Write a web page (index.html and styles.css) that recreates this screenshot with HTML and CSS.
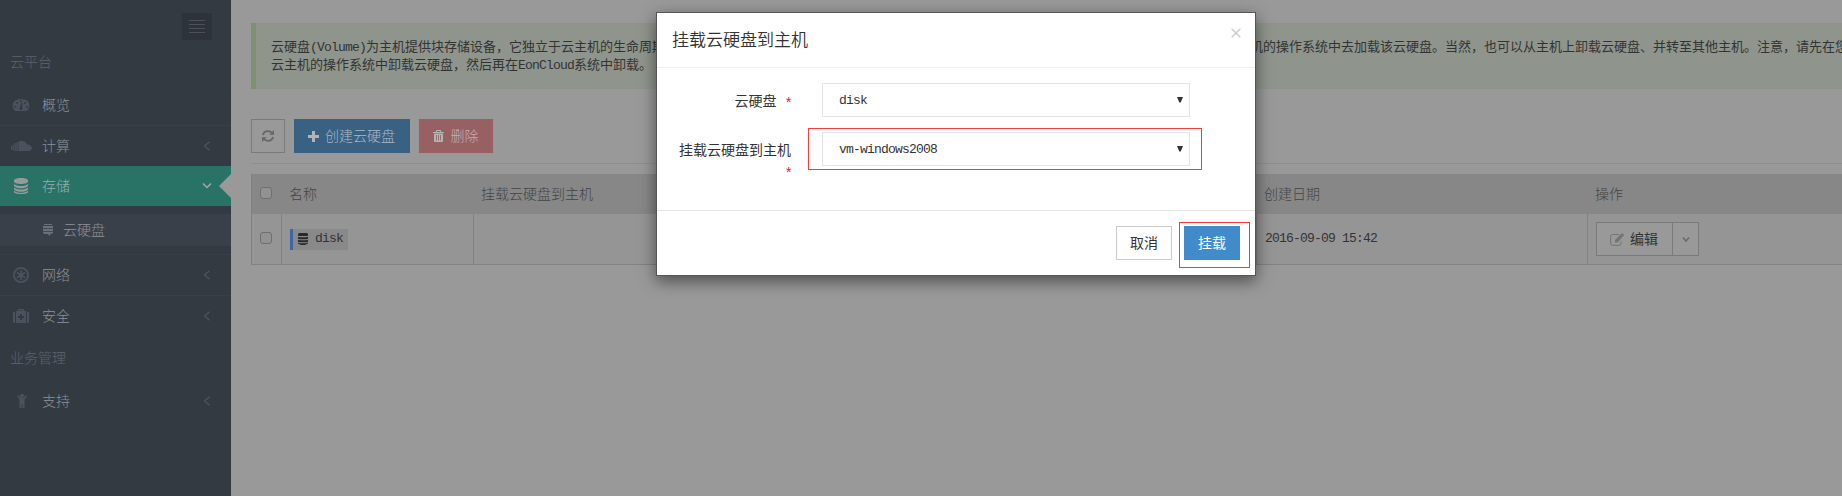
FILE: index.html
```html
<!DOCTYPE html>
<html lang="zh-CN">
<head>
<meta charset="utf-8">
<title>EonCloud</title>
<link rel="stylesheet" href="styles.css">
</head>
<body>
<div class="app">
  <nav class="sidebar">
    <div class="toggle-row"><div class="toggle"><i></i><i></i><i></i><i></i></div></div>
    <div class="nav-heading">云平台</div>
    <a class="nav-item">
      <svg class="nav-icon" viewBox="0 0 22 18"><path fill-rule="evenodd" d="M5 15C2 12 2 7 4.500 5Q7 3 11 3T17.500 5C20 7 20 12 17 15ZM10 4.500v1.700h1.700v-1.700ZM6.200 6v1.700h1.700V6ZM14.200 6v1.700h1.700V6ZM4.500 10v1.700h1.700v-1.700ZM16 10v1.700h1.700v-1.700ZM11.500 7L10 11Q8.500 13.500 11 14Q13.500 13.500 12 11L12.500 7Z"/></svg>
      <span>概览</span>
    </a>
    <a class="nav-item ruled">
      <svg class="nav-icon" viewBox="0 0 22 18"><path d="M1 9h1v4H1zM2.600 7.500h1.200v6H2.600zM4.400 6h1.400v8H4.400zM6.400 5.500l1.400-.5v9H6.400zM8.400 14V5Q11 3 14 4.500Q16.500 5 17 7.500Q21.500 7.500 22 11Q21.500 14 18.500 14Z"/></svg>
      <span>计算</span>
      <svg class="chev" viewBox="0 0 8 10"><path d="M6.500 .8L1.500 5l5 4.200"/></svg>
    </a>
    <a class="nav-item active">
      <svg class="nav-icon" viewBox="0 0 22 18"><path d="M6 1.500h2V1h6v.5h2l2 1.500v2l-2 1.500h-2l-1 .5H9L8 6.500H6L4 5V3zM4 7l2 1.200 3 .8h4l3-.8L18 7v2l-2 1.500-3 .7H9l-3-.7L4 9zM4 10.500l2 1.200 3 .8h4l3-.8 2-1.200v2L16 14l-3 .7H9L6 14l-2-1.500zM4 13.800L6 15l3 .8h4l3-.8 2-1.200V15.500L16 16.500l-2 .5H8l-2-.5-2-1z"/></svg>
      <span>存储</span>
      <svg class="chev down" viewBox="0 0 10 8"><path d="M1 1.500l4 4 4-4"/></svg>
      <b class="notch"></b>
    </a>
    <div class="submenu">
      <a class="sub-item">
        <svg class="sub-icon" viewBox="0 0 10 12"><path d="M1 0h8v1H1zM0 2h10v2.300H0zM0 5h10v2.300H0zM0 8h10v1L8.500 10H7.500l-1 2L5 10H1.500L0 9z"/></svg>
        <span>云硬盘</span>
      </a>
    </div>
    <a class="nav-item ruled">
      <svg class="nav-icon" viewBox="0 0 22 18"><circle cx="11" cy="9" r="7.100" fill="none" stroke="currentColor" stroke-width="1.900"/><path d="M11 4v10M7 6.500l8 5M15 6.500l-8 5" stroke="currentColor" stroke-width="1.700"/><circle cx="11" cy="9" r="2"/></svg>
      <span>网络</span>
      <svg class="chev" viewBox="0 0 8 10"><path d="M6.500 .8L1.500 5l5 4.200"/></svg>
    </a>
    <a class="nav-item ruled">
      <svg class="nav-icon" viewBox="0 0 22 18"><path fill-rule="evenodd" d="M3 5h2v11H4l-1-1zM17 5h2v10l-1 1h-1zM6 4h2V2.500L8.500 2h5l.5.500V4h2v12H6zM9.300 3.200V4h3.400v-.8zM10 7v2H8v2h2v2h2v-2h2V9h-2V7z"/></svg>
      <span>安全</span>
      <svg class="chev" viewBox="0 0 8 10"><path d="M6.500 .8L1.500 5l5 4.200"/></svg>
    </a>
    <div class="nav-heading second">业务管理</div>
    <a class="nav-item">
      <svg class="nav-icon" viewBox="0 0 22 18"><circle cx="12" cy="3.800" r="2.100"/><path d="M6.800 4L8.200 3.200 10.500 5.800h3L15.800 3.200l1.400.8-2.700 3.500V16h-2.100v-4h-.8v4H9.500V7.500z"/></svg>
      <span>支持</span>
      <svg class="chev" viewBox="0 0 8 10"><path d="M6.500 .8L1.500 5l5 4.200"/></svg>
    </a>
  </nav>

  <main class="content">
    <div class="note">
      <div>云硬盘<span class="en">(Volume)</span>为主机提供块存储设备，它独立于云主机的生命周期，可以被加载到任意运行中的云主机上使用。将云硬盘加载到云主机之后，您还需要登录到您的该云主机的操作系统中去加载该云硬盘。当然，也可以从主机上卸载云硬盘、并转至其他主机。注意，请先在您</div>
      <div>云主机的操作系统中卸载云硬盘，然后再在<span class="en">EonCloud</span>系统中卸载。</div>
    </div>
    <div class="toolbar">
      <button class="btn refresh"><svg width="12" height="12" viewBox="0 0 12 12"><path d="M1 5Q1.800 1.200 6 1.200Q8.500 1.200 10.300 3.200M11 7Q10.200 10.800 6 10.800Q3.500 10.800 1.700 8.800" fill="none" stroke="currentColor" stroke-width="1.700"/><path d="M12 0v4.800H7.300zM0 12V7.200h4.700z"/></svg></button>
      <button class="btn create"><svg width="11" height="11" viewBox="0 0 11 11"><path d="M4 0h3v4h4v3H7v4H4V7H0V4h4z"/></svg><span>创建云硬盘</span></button>
      <button class="btn remove"><svg width="11" height="12" viewBox="0 0 11 12"><path fill-rule="evenodd" d="M3 2V.8Q3 0 4 0h3q1 0 1 .8V2h3v1H0V2zM4 1.100V2h3v-.9zM1 3.500h9V11q0 1-1 1H2q-1 0-1-1zM3 5v5.500h.8V5zM5.100 5v5.500h.8V5zM7.200 5v5.500H8V5z"/></svg><span>删除</span></button>
    </div>
    <div class="table">
      <div class="tr head">
        <div class="td check"><i class="checkbox"></i></div>
        <div class="td">名称</div>
        <div class="td">挂载云硬盘到主机</div>
        <div class="td">创建日期</div>
        <div class="td">操作</div>
      </div>
      <div class="tr row">
        <div class="td check"><i class="checkbox"></i></div>
        <div class="td"><span class="tag"><svg width="10" height="12" viewBox="0 0 10 12"><path d="M1 0h8l1 1v1.500L9 3H1L0 2.500V1zM0 3.700l2 .6h6l2-.6v2L8 6.300H2L0 5.700zM0 6.700l2 .6h6l2-.6v2L8 9.300H2L0 8.700zM0 9.600l2 .6h6l2-.6v.9L7 12H3L0 10.500z"/></svg><span class="en">disk</span></span></div>
        <div class="td"></div>
        <div class="td"><span class="en">2016-09-09 15:42</span></div>
        <div class="td"><div class="split">
          <span class="edit"><svg width="14" height="13" viewBox="0 0 14 13"><path d="M9 1.500H2.500Q.6 1.500.6 3.500v7q0 1.900 1.900 1.900h6.500q1.900 0 1.900-1.900V8.500" fill="none" stroke="currentColor"/><path d="M5 9.500V7L11.500.500Q12.200 0 13 .8l.5.500q.8.700 0 1.500L7.500 9.500z"/></svg><span>编辑</span></span>
          <span class="drop"><svg width="8" height="7" viewBox="0 0 8 7"><path d="M1 1.500l3 3.500 3-3.500" fill="none" stroke="currentColor" stroke-width="1.500"/></svg></span>
        </div></div>
      </div>
    </div>
  </main>
</div>

<section class="modal">
  <header class="modal-head"><h1>挂载云硬盘到主机</h1><svg class="close" viewBox="0 0 10 10"><path d="M.7.7l8.600 8.600M9.300.7L.7 9.300"/></svg></header>
  <div class="modal-body">
    <div class="field">
      <label>云硬盘<em>*</em></label>
      <div class="select"><span class="en">disk</span><svg class="arrow" viewBox="0 0 6 6"><path d="M0 0h6L3.700 5.500H2.300z"/></svg></div>
    </div>
    <div class="field">
      <label>挂载云硬盘到主机<em>*</em></label>
      <div class="select marked"><span class="en">vm-windows2008</span><svg class="arrow" viewBox="0 0 6 6"><path d="M0 0h6L3.700 5.500H2.300z"/></svg></div>
    </div>
  </div>
  <footer class="modal-foot">
    <button class="btn cancel"><span>取消</span></button>
    <div class="confirm"><button class="btn primary"><span>挂载</span></button></div>
  </footer>
</section>
</body>
</html>
```
FILE: styles.css
```css
*, *::before, *::after { box-sizing: border-box; }
body {
  margin: 0;
  height: 496px;
  overflow: hidden;
  background: #999;
  color: #333;
  font: 300 14px/20px "Noto Sans CJK SC", sans-serif;
}
svg { display: block; flex: none; fill: currentColor; }
.en { font-family: "Liberation Mono", monospace; font-size: 13px; font-weight: 400; letter-spacing: -0.8px; white-space: pre; }
.app { display: flex; height: 496px; }

/* sidebar */
.sidebar { flex: none; width: 231px; background: #343a42; color: #8d9198; }
.toggle-row { display: flex; justify-content: flex-end; padding: 13px 19px 0 0; }
.toggle { display: flex; flex-direction: column; gap: 3px; width: 30px; height: 27px; padding: 7px; background: #2e323b; }
.toggle i { height: 1px; background: #4b505a; }
.nav-heading { height: 45px; padding: 11px 0 0 10px; color: #5c646f; }
.nav-item { display: flex; align-items: center; position: relative; height: 40px; padding: 0 20px 0 10px; }
.nav-item > span, .sub-item > span, .btn > span, .edit > span { margin-top: -2px; }
.nav-item.ruled { height: 41px; border-top: 1px solid #3a4048; }
.nav-icon { width: 22px; height: 18px; margin-right: 10px; color: #4b525d; }
.chev { width: 8px; height: 10px; margin-left: auto; fill: none; stroke: #4d545e; stroke-width: 1.300; }
.chev.down { width: 10px; height: 8px; margin-right: -1px; stroke: #a3aaa9; stroke-width: 1.500; }
.active { background: #287266; color: #98b0ad; }
.active .nav-icon { color: #989a9a; }
.notch { position: absolute; right: 0; top: 8px; border: solid transparent; border-width: 12px 12px 12px 0; border-right-color: #999; }
.submenu { height: 48px; padding: 8px 0; }
.sub-item { display: flex; align-items: center; height: 32px; padding-left: 43px; background: #3a4049; }
.sub-icon { width: 10px; height: 12px; margin-right: 10px; color: #6a7079; }

/* content */
.content { flex: none; width: 1611px; padding: 23px 0 0 20px; }
.note { height: 66px; padding: 14px 0 0 15px; border-left: 5px solid #7d9170; background: #8f958d; font-size: 13px; font-weight: 400; line-height: 18px; white-space: nowrap; }
.note div { height: 18px; }
.toolbar { display: flex; gap: 9px; height: 75px; padding-top: 30px; border-bottom: 1px solid #8e8e8e; }
.btn { display: flex; align-items: center; justify-content: center; height: 34px; padding: 0; border: 0; font: inherit; color: inherit; }
.refresh { width: 34px; border: 1px solid #7a7a7a; background: transparent; color: #666; }
.create { width: 116px; gap: 6px; padding-right: 1px; background: #396184; color: #acb8c2; }
.create svg, .remove svg { color: #b4b4b4; }
.remove { width: 74px; gap: 7px; padding-right: 1px; background: #976163; color: #c2aeaf; }
.table { margin-top: 10px; border-left: 1px solid #828282; border-bottom: 1px solid #828282; }
.tr { display: grid; grid-template-columns: 29px 192px 783px 331px 1fr; }
.td { display: flex; align-items: center; padding-left: 8px; }
.head { height: 40px; padding-bottom: 2px; background: #878787; color: #444; }
.head .td + .td { padding-left: 8px; }
.row { height: 50px; background: #959595; }
.row .td + .td { border-left: 1px solid #828282; }
.row .check { padding-bottom: 2px; }
.checkbox { width: 12px; height: 12px; border: 1px solid #6f6f6f; border-radius: 3px; background: #929292; }
.tag { display: flex; align-items: center; width: 58px; height: 21px; padding-left: 5px; border-left: 3px solid #3d65a8; background: #898989; }
.tag svg { margin-right: 7px; color: #292929; }
.split { display: flex; height: 34px; border: 1px solid #7a7a7a; background: #999; }
.edit { display: flex; align-items: center; gap: 6px; width: 75px; padding-left: 13px; font-weight: 400; }
.edit svg { color: #747474; }
.drop { display: flex; align-items: center; justify-content: center; width: 26px; border-left: 1px solid #7a7a7a; color: #696969; }

/* dialog */
.modal { position: absolute; left: 656px; top: 12px; width: 600px; height: 264px; border: 1px solid #565656; background: #fff; font-weight: 400; box-shadow: 0 5px 15px rgba(0, 0, 0, .5); }
.modal-head { display: flex; justify-content: space-between; height: 55px; padding: 15px 14px 0 15px; border-bottom: 1px solid #eee; }
.modal-head h1 { margin: -1px 0 0; font-size: 17px; font-weight: 350; line-height: 23px; }
.close { width: 10px; height: 10px; fill: none; stroke: #ccc; stroke-width: 1.500; }
.modal-body { display: flex; flex-direction: column; gap: 15px; height: 142px; padding-top: 15px; }
.field { display: flex; gap: 30px; height: 34px; }
.field label { width: 135px; padding: 7px 1px 0 14px; text-align: right; line-height: 21px; }
.field em { display: inline-block; margin-left: 8px; color: #e01b1b; font: 400 14px/20px "Liberation Mono", monospace; letter-spacing: -2px; position: relative; top: 2px; }
.select { display: flex; align-items: center; justify-content: space-between; width: 368px; height: 34px; padding: 0 6px 0 16px; border: 1px solid #e4e4e4; }
.select .en { margin-top: 2px; }
.arrow { width: 6px; height: 6px; }
.marked { position: relative; }
.marked::after { content: ""; position: absolute; left: -15px; top: -5px; width: 394px; height: 42px; border: 1px solid #f73a3a; }
.modal-foot { display: flex; justify-content: flex-end; gap: 12px; padding: 15px 15px 0 0; border-top: 1px solid #e5e5e5; }
.cancel { width: 56px; border: 1px solid #ccc; background: #fff; }
.confirm { position: relative; }
.confirm::after { content: ""; position: absolute; left: -5px; top: -4px; width: 71px; height: 46px; border: 1px solid #f73a3a; }
.primary { width: 56px; background: #428bca; color: #fff; }
```
